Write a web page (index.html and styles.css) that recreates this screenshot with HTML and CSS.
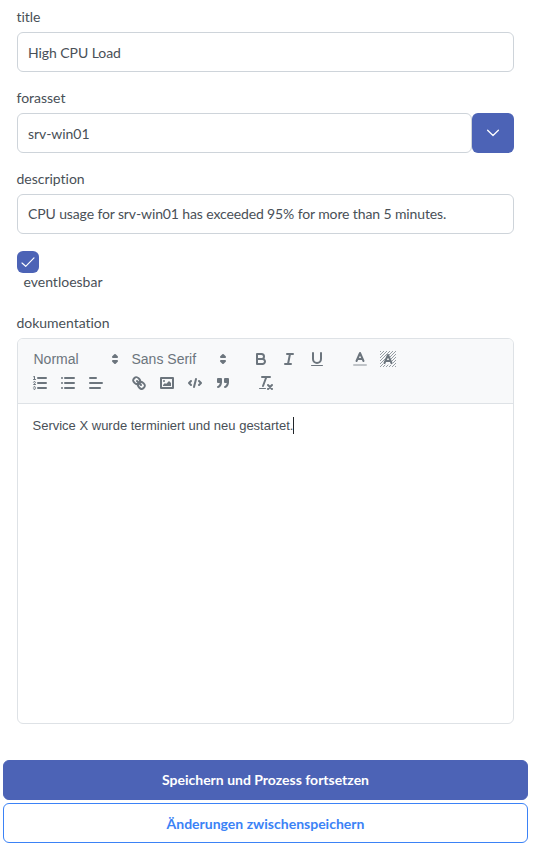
FILE: index.html
```html
<!DOCTYPE html>
<html lang="de">
<head>
<meta charset="utf-8">
<title>Event</title>
<link rel="stylesheet" href="styles.css">
</head>
<body>
<main class="form">
  <div class="fields">
    <div class="field">
      <label class="label">title</label>
      <div class="input">High CPU Load</div>
    </div>
    <div class="field">
      <label class="label">forasset</label>
      <div class="dropdown">
        <div class="input">srv-win01</div>
        <div class="trigger"><svg width="14" height="14" viewBox="0 0 14 14"><path d="M1.6 4.3 7 9.500l5.400-5.200" fill="none" stroke="#fff" stroke-width="1.3" stroke-linecap="round" stroke-linejoin="round"/></svg></div>
      </div>
    </div>
    <div class="field">
      <label class="label">description</label>
      <div class="input sentence">CPU usage for srv-win01 has exceeded 95% for more than 5 minutes.</div>
    </div>
    <div class="check-field">
      <div class="checkbox"><svg width="14" height="14" viewBox="0 0 14 14"><path d="M1 8 4.7 11.3 13 2.8" fill="none" stroke="#fff" stroke-width="1.15" stroke-linecap="round" stroke-linejoin="round"/></svg></div>
      <label class="check-label">eventloesbar</label>
    </div>
    <label class="label">dokumentation</label>
    <div class="editor">
      <div class="toolbar">
        <div class="formats">
          <span class="picker header">Normal<svg viewBox="0 0 18 18"><polygon class="stroke" points="7 11 9 13 11 11 7 11"/><polygon class="stroke" points="7 7 9 5 11 7 7 7"/></svg></span>
          <span class="picker font">Sans Serif<svg viewBox="0 0 18 18"><polygon class="stroke" points="7 11 9 13 11 11 7 11"/><polygon class="stroke" points="7 7 9 5 11 7 7 7"/></svg></span>
        </div>
        <div class="formats">
          <span class="tool"><svg viewBox="0 0 18 18"><path class="stroke" d="M5,4H9.5A2.5,2.5,0,0,1,12,6.5v0A2.5,2.5,0,0,1,9.5,9H5V4Z"/><path class="stroke" d="M5,9h5.5A2.5,2.5,0,0,1,13,11.5v0A2.5,2.5,0,0,1,10.5,14H5V9Z"/></svg></span>
          <span class="tool"><svg viewBox="0 0 18 18"><path class="stroke" d="M7 4h6M5 14h6M8 14 10 4"/></svg></span>
          <span class="tool"><svg viewBox="0 0 18 18"><path class="stroke" d="M5,3V9a4.012,4.012,0,0,0,4,4H9a4.012,4.012,0,0,0,4-4V3"/><rect class="fill" height="1" rx=".5" width="12" x="3" y="15"/></svg></span>
        </div>
        <div class="formats">
          <span class="tool"><svg viewBox="0 0 18 18"><path class="stroke faint" d="M3 15h12"/><path class="stroke" d="M5.5 11 9 3l3.500 8M11.630 9H6.380"/></svg></span>
          <span class="tool"><svg viewBox="0 0 18 18"><defs><clipPath id="hatch"><path clip-rule="evenodd" d="M1 1h16v16H1zM9 3.300 3.800 14.700h10.400z"/></clipPath></defs><path class="hatch" clip-path="url(#hatch)" d="M0 3 3 0M0 6 6 0M0 9 9 0M0 12 12 0M0 15 15 0M0 18 18 0M3 18 18 3M6 18 18 6M9 18 18 9M12 18 18 12M15 18 18 15"/><path class="stroke" d="M5.500 13 9 5l3.500 8M11.630 11H6.380"/></svg></span>
        </div>
        <div class="formats">
          <span class="tool"><svg viewBox="0 0 18 18"><path class="stroke" d="M7 4h8M7 9h8M7 14h8"/><path class="stroke thin" d="M2.500 5.500h2"/><path class="fill" d="M3.5,6A0.5,0.5,0,0,1,3,5.5V3.085l-0.276.138A0.5,0.5,0,0,1,2.053,3c-0.124-.247-0.023-0.324.224-0.447l1-.5A0.5,0.5,0,0,1,4,2.5v3A0.5,0.5,0,0,1,3.5,6Z"/><path class="stroke thin" d="M4.5,10.5h-2c0-.234,1.85-1.076,1.85-2.234A0.959,0.959,0,0,0,2.5,8.156"/><path class="stroke thin" d="M2.5,14.846a0.959,0.959,0,0,0,1.85-.109A0.7,0.7,0,0,0,3.75,14a0.688,0.688,0,0,0,.6-0.736,0.959,0.959,0,0,0-1.85-.109"/></svg></span>
          <span class="tool"><svg viewBox="0 0 18 18"><path class="stroke" d="M6 4h9M6 9h9M6 14h9M3 4h0M3 9h0M3 14h0"/></svg></span>
          <span class="tool"><svg viewBox="0 0 18 18"><path class="stroke" d="M3 9h12M3 14h10M3 4h6"/></svg></span>
        </div>
        <div class="formats">
          <span class="tool"><svg viewBox="0 0 18 18"><path class="stroke" d="M7 7l4 4"/><path class="stroke" d="M8.9,4.577a3.476,3.476,0,0,1,.36,4.679A3.476,3.476,0,0,1,4.577,8.9C3.185,7.5,2.035,6.4,4.217,4.217S7.5,3.185,8.9,4.577Z"/><path class="stroke" d="M13.423,9.1a3.476,3.476,0,0,0-4.679-.36,3.476,3.476,0,0,0,.36,4.679c1.392,1.392,2.5,2.542,4.679.36S14.815,10.5,13.423,9.1Z"/></svg></span>
          <span class="tool"><svg viewBox="0 0 18 18"><rect class="stroke" height="10" width="12" x="3" y="4"/><circle class="fill" cx="6" cy="7" r="1"/><polyline class="fill" points="5 12 5 11 7 9 8 10 11 7 13 9 13 12 5 12"/></svg></span>
          <span class="tool"><svg viewBox="0 0 18 18"><path class="stroke" d="M5 7 3 9l2 2M13 7l2 2-2 2M10 5 8 13"/></svg></span>
          <span class="tool"><svg viewBox="0 0 18 18"><rect class="fill stroke solid" height="3" width="3" x="4" y="5"/><rect class="fill stroke solid" height="3" width="3" x="11" y="5"/><path class="fill stroke solid" d="M7,8c0,4.031-3,5-3,5M14,8c0,4.031-3,5-3,5"/></svg></span>
        </div>
        <div class="formats">
          <span class="tool"><svg viewBox="0 0 18 18"><path class="stroke" d="M5 3h8M6 12 9.350 3M11 11l4 4M15 11l-4 4"/><rect class="fill" height="1" rx=".5" width="7" x="2" y="14"/></svg></span>
        </div>
      </div>
      <div class="content"><span class="typed">Service X wurde terminiert und neu gestartet.</span></div>
    </div>
  </div>
  <div class="actions">
    <button class="button primary">Speichern und Prozess fortsetzen</button>
    <button class="button outlined">Änderungen zwischenspeichern</button>
  </div>
</main>
</body>
</html>
```
FILE: styles.css
```css
* { box-sizing: border-box; }
body {
  margin: 0;
  background: #fff;
  color: #495057;
  font: 14px/17px Lato, sans-serif;
  font-variant-ligatures: none;
}
.form { width: 531px; padding: 8px 3px 0; }
.fields { padding: 0 14px; width: 525px; }
.field { margin-bottom: 17px; }
.label { display: block; margin: 0 0 7px -0.5px; letter-spacing: -.02px; }
.input {
  height: 40px;
  padding: 0 10px;
  border: 1px solid #ced4da;
  border-radius: 6px;
  line-height: 40px;
  letter-spacing: -.06px;
  white-space: nowrap;
}
.sentence { line-height: 38px; letter-spacing: -.12px; }
.dropdown { display: flex; }
.dropdown .input { flex: 1; }
.trigger {
  display: flex;
  width: 42px;
  height: 40px;
  align-items: center;
  justify-content: center;
  background: #4c63b6;
  border-radius: 6px;
}
.check-field { margin-bottom: 24px; }
.checkbox {
  display: flex;
  width: 22px;
  height: 22px;
  align-items: center;
  justify-content: center;
  background: #4c63b6;
  border-radius: 6px;
}
.check-label { display: block; margin-left: 6.5px; }
.editor {
  height: 386px;
  border: 1px solid #dee2e6;
  border-radius: 6px;
  overflow: hidden;
}
.toolbar {
  display: flex;
  flex-wrap: wrap;
  padding: 8px;
  background: #f8f9fa;
  border-bottom: 1px solid #dee2e6;
}
.formats { display: flex; margin-right: 15px; }
.picker {
  display: flex;
  height: 24px;
  padding-left: 7.5px;
  justify-content: space-between;
  align-items: center;
  color: #6c757d;
  font: 500 14px/22px "Liberation Sans", sans-serif;
  padding-bottom: 1px;
}
.picker svg { width: 18px; height: 18px; margin-top: 1px; }
.header { width: 98px; }
.font { width: 108px; }
.tool { width: 28px; height: 24px; padding: 3px 5px; }
.tool svg { display: block; width: 18px; height: 18px; }
.stroke {
  fill: none;
  stroke: #6c757d;
  stroke-width: 2;
  stroke-linecap: round;
  stroke-linejoin: round;
}
.fill, .solid { fill: #6c757d; }
.thin { stroke-width: 1; }
.faint { opacity: .4; }
.hatch { fill: none; stroke: #6c757d; stroke-width: .7; }
.content {
  padding: 13px 14.5px;
  font: 13px/18px "Liberation Sans", sans-serif;
}
.typed { display: inline-block; height: 17px; border-right: 1px solid #212529; }
.actions { display: grid; gap: 3px; margin-top: 36px; }
.button {
  height: 40px;
  padding: 0 0 2px;
  border: 1px solid #4c63b6;
  border-radius: 6px;
  font: 700 14px/17px Lato, sans-serif;
}
.primary { background: #4c63b6; color: #fff; }
.outlined { padding-bottom: 0; background: #fff; border-color: #3b82f6; color: #3b82f6; }
```
